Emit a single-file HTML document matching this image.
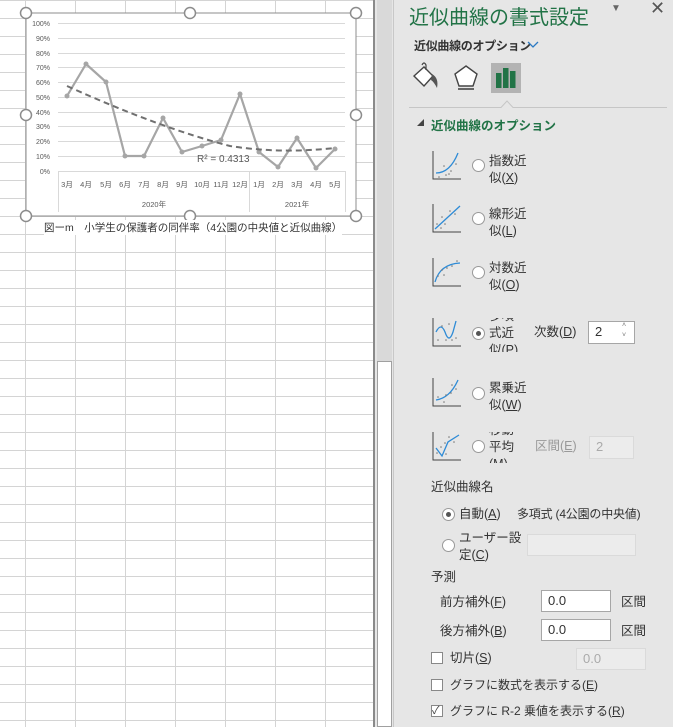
<!DOCTYPE html>
<html><head><meta charset="utf-8"><style>
*{margin:0;padding:0;box-sizing:border-box}
body{width:673px;height:727px;overflow:hidden;position:relative;background:#fff;font-family:"Liberation Sans","Noto Sans CJK JP",sans-serif;color:#333}
.a{position:absolute}
.grid{left:0;top:0;width:373px;height:727px;background-color:#fff;
background-image:linear-gradient(to right,#d4d4d4 1px,transparent 1px),linear-gradient(to bottom,#d4d4d4 1px,transparent 1px);
background-size:50px 18px;background-position:25px 0,0 0}
.panel{left:395px;top:0;width:278px;height:727px;background:#e6e6e6}
.t{position:absolute;font-size:12.5px;line-height:17px;color:#333;white-space:nowrap}
.radio{position:absolute;width:13px;height:13px;border:1px solid #999;border-radius:50%;background:#fff}
.radio.on::after{content:"";position:absolute;left:3px;top:3px;width:5px;height:5px;border-radius:50%;background:#555}
.cb{position:absolute;width:12px;height:12px;border:1px solid #888;background:#fff}
.in{position:absolute;background:#fff;border:1px solid #a6a6a6;font-size:13px;padding:3px 6px;color:#333}
.dis{position:absolute;background:#ececec;border:1px solid #dadada;font-size:13px;padding:3px 6px;color:#aaa}
u{text-decoration:underline}
</style></head><body>
<div class="a grid"></div>
<div class="a" style="left:373px;top:0;width:2px;height:727px;background:#8a8a8a"></div>
<div class="a" style="left:375px;top:0;width:20px;height:727px;background:#e6e6e6"></div>
<div class="a" style="left:377px;top:0;width:15px;height:727px;background:#d9d9d9"></div>
<div class="a" style="left:377px;top:361px;width:15px;height:366px;background:#fff;border:1px solid #a0a0a0"></div>
<div class="a" style="left:393px;top:0;width:1px;height:727px;background:#c8c8c8"></div>

<svg class="a" style="left:0;top:0" width="373" height="240" viewBox="0 0 373 240">
<rect x="26" y="13" width="330" height="203" fill="#fff" stroke="#8c8c8c" stroke-width="1"/>
<g stroke="#d9d9d9" stroke-width="1">
<line x1="58" x2="345" y1="23.5" y2="23.5"/><line x1="58" x2="345" y1="38.5" y2="38.5"/><line x1="58" x2="345" y1="53.5" y2="53.5"/><line x1="58" x2="345" y1="67.5" y2="67.5"/><line x1="58" x2="345" y1="82.5" y2="82.5"/><line x1="58" x2="345" y1="97.5" y2="97.5"/><line x1="58" x2="345" y1="112.5" y2="112.5"/><line x1="58" x2="345" y1="126.5" y2="126.5"/><line x1="58" x2="345" y1="141.5" y2="141.5"/><line x1="58" x2="345" y1="156.5" y2="156.5"/><line x1="58" x2="345" y1="171.5" y2="171.5"/>
<line x1="58.5" x2="58.5" y1="171" y2="212"/><line x1="249.5" x2="249.5" y1="171" y2="212"/><line x1="345.5" x2="345.5" y1="171" y2="212"/>
</g>
<g font-size="7" fill="#595959" text-anchor="end" font-family="Liberation Sans,sans-serif">
<text x="50" y="26">100%</text><text x="50" y="41">90%</text><text x="50" y="56">80%</text><text x="50" y="70">70%</text><text x="50" y="85">60%</text><text x="50" y="100">50%</text><text x="50" y="115">40%</text><text x="50" y="129">30%</text><text x="50" y="144">20%</text><text x="50" y="159">10%</text><text x="50" y="174">0%</text>
</g>
<g font-size="7.5" fill="#595959" text-anchor="middle" font-family="Liberation Sans,Noto Sans CJK JP,sans-serif">
<text x="67" y="187">3月</text><text x="86" y="187">4月</text><text x="106" y="187">5月</text><text x="125" y="187">6月</text><text x="144" y="187">7月</text><text x="163" y="187">8月</text><text x="182" y="187">9月</text><text x="202" y="187">10月</text><text x="221" y="187">11月</text><text x="240" y="187">12月</text><text x="259" y="187">1月</text><text x="278" y="187">2月</text><text x="297" y="187">3月</text><text x="316" y="187">4月</text><text x="335" y="187">5月</text>
<text x="154" y="207">2020年</text><text x="297" y="207">2021年</text>
</g>
<polyline fill="none" stroke="#a6a6a6" stroke-width="2.2" stroke-linejoin="round" points="67,96 86,64 106,82 125,156 144,156 163,118 182,152 202,146 221,140 240,94 259,152 278,167 297,138 316,168 335,149"/>
<g fill="#a6a6a6"><circle cx="67" cy="96" r="2.5"/><circle cx="86" cy="64" r="2.5"/><circle cx="106" cy="82" r="2.5"/><circle cx="125" cy="156" r="2.5"/><circle cx="144" cy="156" r="2.5"/><circle cx="163" cy="118" r="2.5"/><circle cx="182" cy="152" r="2.5"/><circle cx="202" cy="146" r="2.5"/><circle cx="221" cy="140" r="2.5"/><circle cx="240" cy="94" r="2.5"/><circle cx="259" cy="152" r="2.5"/><circle cx="278" cy="167" r="2.5"/><circle cx="297" cy="138" r="2.5"/><circle cx="316" cy="168" r="2.5"/><circle cx="335" cy="149" r="2.5"/></g>
<path d="M67,86 Q 160,128 230,146 Q 280,154 335,148" fill="none" stroke="#707070" stroke-width="2" stroke-dasharray="6,4"/>
<text x="197" y="162" font-size="10" fill="#595959" font-family="Liberation Sans,sans-serif">R² = 0.4313</text>
<g fill="#fff" stroke="#8c8c8c" stroke-width="1.5">
<circle cx="26" cy="13" r="5.5"/><circle cx="190" cy="13" r="5.5"/><circle cx="356" cy="13" r="5.5"/>
<circle cx="26" cy="115" r="5.5"/><circle cx="356" cy="115" r="5.5"/>
<circle cx="26" cy="216" r="5.5"/><circle cx="190" cy="216" r="5.5"/><circle cx="356" cy="216" r="5.5"/>
</g>
</svg>
<div class="a" style="left:44px;top:220px;font-size:10.5px;color:#333;white-space:nowrap;background:#fff">図ーm　小学生の保護者の同伴率（4公園の中央値と近似曲線）</div>

<div class="a panel"></div>
<div class="a" style="left:409px;top:1px;font-size:20px;color:#217346;white-space:nowrap">近似曲線の書式設定</div>
<div class="a" style="left:611px;top:3px;font-size:10px;color:#666">▼</div>
<div class="a" style="left:650px;top:-2px;font-size:18px;color:#555">✕</div>
<div class="a" style="left:414px;top:37px;font-size:12px;font-weight:bold;color:#333;white-space:nowrap;letter-spacing:-0.3px">近似曲線のオプション</div>
<svg class="a" style="left:527px;top:41px" width="12" height="8"><path d="M1,1 L6,6 L11,1" fill="none" stroke="#2b79c2" stroke-width="1.3"/></svg>
<svg class="a" style="left:410px;top:62px" width="30" height="32"><path d="M4,14 L14,5 L23,14 L14,24 Z" fill="#fff" stroke="#444" stroke-width="1.4"/><path d="M12,3 Q14,-1 16,3 L16,8" fill="none" stroke="#444" stroke-width="1.2"/><path d="M22,12 Q29,16 27,26 Q24,20 21,18 Z" fill="#555"/></svg>
<svg class="a" style="left:452px;top:63px" width="28" height="30"><path d="M14,3 L25,11 L21,23 L7,23 L3,11 Z" fill="#fff" stroke="#444" stroke-width="1.4"/><rect x="6" y="25" width="16" height="2" fill="#666"/></svg>
<div class="a" style="left:491px;top:63px;width:30px;height:30px;background:#b3b3b3"></div>
<svg class="a" style="left:491px;top:63px" width="30" height="30"><rect x="5" y="10" width="5.5" height="15" fill="#217346"/><rect x="12" y="5" width="5.5" height="20" fill="#217346"/><rect x="19" y="8" width="5.5" height="17" fill="#217346"/></svg>
<svg class="a" style="left:409px;top:98px" width="258" height="12"><path d="M0,9.5 H92 L98,3 L104,9.5 H258" fill="none" stroke="#c6c6c6" stroke-width="1"/></svg>
<div class="a" style="left:417px;top:118px;font-size:7px;color:#444">◢</div>
<div class="a" style="left:431px;top:115px;font-size:12.5px;font-weight:bold;color:#217346;white-space:nowrap">近似曲線のオプション</div>

<svg class="a" style="left:432px;top:151px" width="30" height="30"><path d="M1,0 V28 H29" fill="none" stroke="#444"/><path d="M4,22 Q18,22 26,2" fill="none" stroke="#2e8bd6" stroke-width="1.3"/><g fill="#777"><circle cx="7" cy="26" r=".8"/><circle cx="12" cy="15" r=".8"/><circle cx="17" cy="23" r=".8"/><circle cx="19" cy="20" r=".8"/><circle cx="24" cy="13" r=".8"/><circle cx="14" cy="24" r=".8"/></g></svg>
<svg class="a" style="left:432px;top:204px" width="30" height="30"><path d="M1,0 V28 H29" fill="none" stroke="#444"/><path d="M3,25 L28,2" fill="none" stroke="#2e8bd6" stroke-width="1.3"/><g fill="#777"><circle cx="5" cy="20" r=".8"/><circle cx="10" cy="13" r=".8"/><circle cx="13" cy="20" r=".8"/><circle cx="18" cy="7" r=".8"/><circle cx="23" cy="10" r=".8"/><circle cx="9" cy="24" r=".8"/></g></svg>
<svg class="a" style="left:432px;top:258px" width="30" height="30"><path d="M1,0 V28 H29" fill="none" stroke="#444"/><path d="M3,24 Q8,6 28,5" fill="none" stroke="#2e8bd6" stroke-width="1.3"/><g fill="#777"><circle cx="6" cy="18" r=".8"/><circle cx="10" cy="12" r=".8"/><circle cx="15" cy="10" r=".8"/><circle cx="20" cy="8" r=".8"/><circle cx="25" cy="3" r=".8"/><circle cx="12" cy="17" r=".8"/></g></svg>
<svg class="a" style="left:432px;top:318px" width="30" height="30"><path d="M1,0 V28 H29" fill="none" stroke="#444"/><path d="M4,14 Q9,4 13,14 Q17,26 21,14 L24,3" fill="none" stroke="#2e8bd6" stroke-width="1.3"/><g fill="#777"><circle cx="6" cy="22" r=".8"/><circle cx="10" cy="8" r=".8"/><circle cx="14" cy="22" r=".8"/><circle cx="20" cy="22" r=".8"/><circle cx="24" cy="20" r=".8"/><circle cx="17" cy="6" r=".8"/></g></svg>
<svg class="a" style="left:432px;top:378px" width="30" height="30"><path d="M1,0 V28 H29" fill="none" stroke="#444"/><path d="M4,22 Q18,20 26,2" fill="none" stroke="#2e8bd6" stroke-width="1.3"/><g fill="#777"><circle cx="6" cy="19" r=".8"/><circle cx="12" cy="24" r=".8"/><circle cx="14" cy="17" r=".8"/><circle cx="19" cy="15" r=".8"/><circle cx="24" cy="11" r=".8"/><circle cx="20" cy="7" r=".8"/></g></svg>
<svg class="a" style="left:432px;top:432px" width="30" height="30"><path d="M1,0 V28 H29" fill="none" stroke="#444"/><path d="M4,16 L10,24 L16,10 L27,3" fill="none" stroke="#2e8bd6" stroke-width="1.3"/><g fill="#777"><circle cx="5" cy="21" r=".8"/><circle cx="9" cy="15" r=".8"/><circle cx="14" cy="22" r=".8"/><circle cx="17" cy="5" r=".8"/><circle cx="22" cy="10" r=".8"/><circle cx="13" cy="11" r=".8"/></g></svg>

<div class="radio" style="left:472px;top:159px"></div>
<div class="t" style="left:489px;top:153px">指数近<br>似(<u>X</u>)</div>
<div class="radio" style="left:472px;top:212px"></div>
<div class="t" style="left:489px;top:206px">線形近<br>似(<u>L</u>)</div>
<div class="radio" style="left:472px;top:266px"></div>
<div class="t" style="left:489px;top:260px">対数近<br>似(<u>O</u>)</div>
<div class="radio on" style="left:472px;top:327px"></div>
<div class="a" style="left:489px;top:318px;width:40px;height:34px;overflow:hidden"><div class="t" style="left:0;top:-10px">多項<br>式近<br>似(<u>P</u>)</div></div>
<div class="t" style="left:534px;top:324px">次数(<u>D</u>)</div>
<div class="in" style="left:588px;top:321px;width:47px;height:23px;padding-top:2px">2</div>
<div class="a" style="left:622px;top:321px;font-size:7px;color:#777;line-height:10px">˄<br>˅</div>
<div class="radio" style="left:472px;top:387px"></div>
<div class="t" style="left:489px;top:380px">累乗近<br>似(<u>W</u>)</div>
<div class="radio" style="left:472px;top:440px"></div>
<div class="a" style="left:489px;top:432px;width:40px;height:31px;overflow:hidden"><div class="t" style="left:0;top:-10px">移動<br>平均<br>(<u>M</u>)</div></div>
<div class="t" style="left:535px;top:438px;color:#999">区間(<u>E</u>)</div>
<div class="dis" style="left:589px;top:436px;width:45px;height:23px;padding-top:2px">2</div>

<div class="t" style="left:431px;top:479px">近似曲線名</div>
<div class="radio on" style="left:442px;top:508px"></div>
<div class="t" style="left:459px;top:506px">自動(<u>A</u>)</div>
<div class="t" style="left:517px;top:506px;font-size:12px;letter-spacing:-0.2px">多項式 (4公園の中央値)</div>
<div class="radio" style="left:442px;top:539px"></div>
<div class="t" style="left:459px;top:530px">ユーザー設<br>定(<u>C</u>)</div>
<div class="dis" style="left:527px;top:534px;width:109px;height:22px"></div>
<div class="t" style="left:431px;top:569px">予測</div>
<div class="t" style="left:440px;top:594px">前方補外(<u>F</u>)</div>
<div class="in" style="left:541px;top:590px;width:70px;height:22px;padding-top:2px">0.0</div>
<div class="t" style="left:621px;top:594px">区間</div>
<div class="t" style="left:440px;top:623px">後方補外(<u>B</u>)</div>
<div class="in" style="left:541px;top:619px;width:70px;height:22px;padding-top:2px">0.0</div>
<div class="t" style="left:621px;top:623px">区間</div>
<div class="cb" style="left:431px;top:652px"></div>
<div class="t" style="left:450px;top:650px">切片(<u>S</u>)</div>
<div class="dis" style="left:576px;top:648px;width:70px;height:22px;padding-top:2px">0.0</div>
<div class="cb" style="left:431px;top:679px"></div>
<div class="t" style="left:450px;top:677px;font-size:12px">グラフに数式を表示する(<u>E</u>)</div>
<div class="cb" style="left:431px;top:705px"></div>
<div class="a" style="left:432px;top:702px;font-size:11px;color:#444">✓</div>
<div class="t" style="left:450px;top:703px;font-size:12px">グラフに R-2 乗値を表示する(<u>R</u>)</div>
</body></html>
